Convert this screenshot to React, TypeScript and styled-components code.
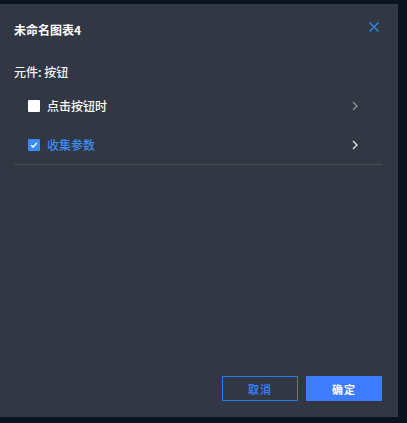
import React from "react";
import styled, { createGlobalStyle } from "styled-components";

const Global = createGlobalStyle`
  html, body { margin: 0; padding: 0; background: #0a1421; }
  body { font-family: "Noto Sans CJK SC", "Noto Sans", sans-serif; }
  * { box-sizing: border-box; }
`;

const Page = styled.div`
  width: 407px;
  height: 423px;
  padding-top: 4px;
  background: #0a1421;
`;

const Dialog = styled.div`
  width: 398px;
  height: 413px;
  background: #323843;
  display: flex;
  flex-direction: column;
  padding: 0 16px 16px 14px;
`;

const Header = styled.div`
  height: 50px;
  display: flex;
  align-items: center;
  justify-content: space-between;
`;

const Title = styled.div`
  color: #ffffff;
  font-size: 12px;
  font-weight: 700;
  line-height: 16px;
  margin-top: 1px;
`;

const Close = styled.button`
  border: none;
  background: none;
  padding: 0;
  width: 12px;
  height: 12px;
  margin-right: 2px;
  margin-top: -5px;
  display: flex;
  cursor: pointer;
`;

const Section = styled.div`
  color: #f2f3f5;
  font-size: 12px;
  font-weight: 500;
  line-height: 16px;
  padding-top: 10px;
  height: 32px;
`;

const List = styled.div`
  border-bottom: 1px solid #474c57;
`;

const Row = styled.div`
  height: 39px;
  display: flex;
  align-items: center;
  padding: 0 24px 0 14px;
`;

const Box = styled.span<{ $checked?: boolean }>`
  width: 12px;
  height: 12px;
  border-radius: 1px;
  background: ${(p) => (p.$checked ? "#3a8bf8" : "#ffffff")};
  display: flex;
  align-items: center;
  justify-content: center;
  flex: none;
`;

const Label = styled.span<{ $active?: boolean }>`
  margin-left: 7px;
  font-size: 12px;
  line-height: 16px;
  font-weight: 500;
  color: ${(p) => (p.$active ? "#3f8cf3" : "#ffffff")};
  flex: 1;
`;

const Chevron = styled.svg<{ $active?: boolean }>`
  width: 6px;
  height: 10px;
  color: ${(p) => (p.$active ? "#e6e9ef" : "#8d929c")};
`;

const Spacer = styled.div`
  flex: 1;
`;

const Footer = styled.div`
  display: flex;
  justify-content: flex-end;
  gap: 8px;
`;

const Button = styled.button<{ $primary?: boolean }>`
  width: 76px;
  height: 25px;
  font-family: "Noto Sans CJK SC", sans-serif;
  font-size: 11px;
  font-weight: 700;
  letter-spacing: 1px;
  border: 1px solid ${(p) => (p.$primary ? "#3d7bff" : "#2a7df0")};
  background: ${(p) => (p.$primary ? "#3d7bff" : "transparent")};
  color: ${(p) => (p.$primary ? "#ffffff" : "#3a7df0")};
  padding: 0;
  cursor: pointer;
`;

const Arrow = ({ active }: { active?: boolean }) => (
  <Chevron $active={active} viewBox="0 0 6 10">
    <path d="M1 1l4 4-4 4" fill="none" stroke="currentColor" strokeWidth="1.3" />
  </Chevron>
);

export default function App() {
  return (
    <Page>
      <Global />
      <Dialog>
        <Header>
          <Title>未命名图表4</Title>
          <Close aria-label="close">
            <svg width="12" height="12" viewBox="0 0 12 12">
              <path d="M1.5 1.5l9 9M10.5 1.5l-9 9" stroke="#2f8de8" strokeWidth="1.4" />
            </svg>
          </Close>
        </Header>
        <Section>元件: 按钮</Section>
        <List>
          <Row>
            <Box />
            <Label>点击按钮时</Label>
            <Arrow />
          </Row>
          <Row>
            <Box $checked>
              <svg width="8" height="8" viewBox="0 0 8 8">
                <path d="M1.2 4.2l1.9 1.8L6.8 2" fill="none" stroke="#fff" strokeWidth="1.3" />
              </svg>
            </Box>
            <Label $active>收集参数</Label>
            <Arrow active />
          </Row>
        </List>
        <Spacer />
        <Footer>
          <Button>取消</Button>
          <Button $primary>确定</Button>
        </Footer>
      </Dialog>
    </Page>
  );
}
